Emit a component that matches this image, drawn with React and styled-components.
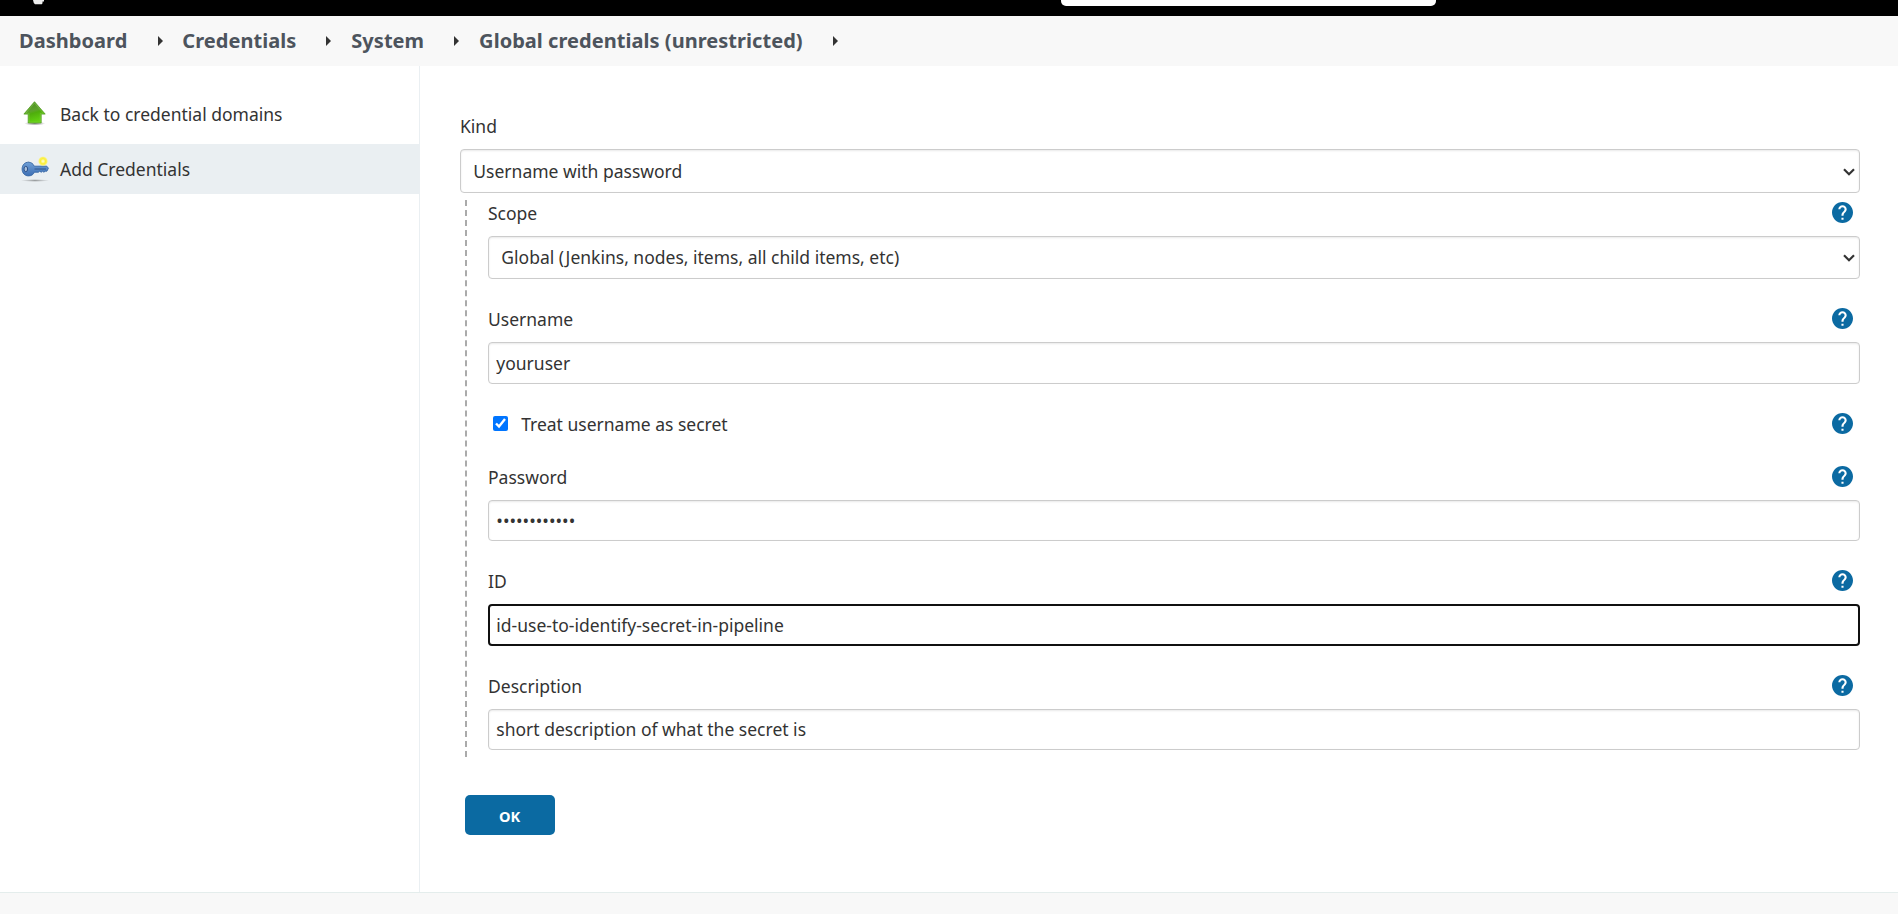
import React from "react";
import styled, { createGlobalStyle } from "styled-components";

const Global = createGlobalStyle`
  *, *::before, *::after { box-sizing: border-box; }
  body {
    margin: 0;
    background: #fff;
    color: #333;
    font-family: "Noto Sans", "Liberation Sans", sans-serif;
    font-size: 17.5px;
    line-height: 24px;
  }
`;

const Page = styled.div`
  display: flex;
  flex-direction: column;
  height: 914px;
  overflow: hidden;
`;

const TopBar = styled.header`
  display: flex;
  align-items: flex-start;
  flex: none;
  height: 16px;
  background: #000;
`;

const LogoEdge = styled.svg`
  width: 12px;
  height: 5px;
  margin-left: 33px;
`;

const SearchEdge = styled.div`
  width: 375px;
  height: 6px;
  margin-left: 1016px;
  background: #fff;
  border-radius: 0 0 5px 5px;
`;

const Breadcrumbs = styled.nav`
  display: flex;
  align-items: center;
  flex: none;
  height: 50px;
  padding-left: 19px;
  background: #f8f8f8;
`;

const Crumb = styled.a`
  color: #4d545d;
  font-size: 20px;
  font-weight: 700;
  letter-spacing: 0.04px;
  line-height: 50px;
`;

const CrumbArrow = styled.svg`
  width: 5px;
  height: 10px;
  margin: 0 19.8px 0 30.2px;
  fill: #333;
`;

const Body = styled.div`
  display: flex;
  flex: none;
  height: 826px;
`;

const Sidebar = styled.aside`
  flex: none;
  width: 420px;
  padding-top: 23px;
  border-right: 1px solid #eaeff2;
`;

const Task = styled.a`
  display: flex;
  align-items: center;
  height: 50px;
  margin-bottom: 5px;
  padding-left: 20px;
  background: ${(p) => (p.$active ? "#eaeff2" : "transparent")};

  svg {
    flex: none;
    width: 30px;
    height: 30px;
    margin-right: 10px;
  }
`;

const Main = styled.main`
  flex: 1;
  padding: 48px 38px 0 40px;
`;

const Label = styled.label`
  flex: 1;
`;

const FieldHead = styled.div`
  display: flex;
  align-items: center;
  height: 24px;
  margin-bottom: 11px;
  padding-right: 7px;
`;

const Control = styled.div`
  display: flex;
  align-items: center;
  height: ${(p) => p.$height}px;
  padding-bottom: ${(p) => p.$height % 2}px;
  border: ${(p) => (p.$focus ? "2px solid #101010" : "1px solid #ccc")};
  border-radius: 4px;
  background: #fff;
  box-shadow: ${(p) => (p.$focus ? "none" : "inset 0 1px 2px rgba(0, 0, 0, 0.09)")};
`;

const Value = styled.input`
  flex: 1;
  min-width: 0;
  padding: 0 0 0 ${(p) => (p.$focus ? 6.3 : 7.3)}px;
  border: 0;
  outline: 0;
  background: transparent;
  color: #333;
  font: inherit;
`;

const Choice = styled.select`
  flex: 1;
  appearance: none;
  padding: 0 0 0 12.3px;
  border: 0;
  outline: 0;
  background: transparent;
  color: #333;
  font: inherit;
`;

const Chevron = styled.svg`
  flex: none;
  width: 12px;
  height: 8px;
  margin: 1px 4px 0 0;
  fill: none;
  stroke: #333;
  stroke-width: 2.2;
`;

const Nested = styled.section`
  height: 557px;
  margin: 7px 0 0 5px;
  padding-left: 21px;
  border-left: 2px dashed #aaa;
`;

const Field = styled.div`
  padding-top: ${(p) => p.$top}px;
`;

const CheckRow = styled.div`
  display: flex;
  align-items: center;
  height: 24px;
  margin-top: 28px;
  padding: 0 7px 0 5px;
`;

const Checkbox = styled.input`
  width: 15px;
  height: 15px;
  margin: 0 13.2px 2px 0;
  accent-color: #0075ff;
`;

const Help = styled.svg`
  flex: none;
  width: 21px;
  height: 21px;
  margin-bottom: 2px;
  fill: #0b6aa2;
`;

const Submit = styled.button`
  display: block;
  width: 90px;
  height: 40px;
  margin: 38px 0 0 5px;
  padding: 1px 1px 0 0;
  border: 0;
  border-radius: 5px;
  background: #0b6aa2;
  color: #fff;
  font: 700 14.6px/38px "Noto Sans", sans-serif;
`;

const Footer = styled.footer`
  flex: 1;
  border-top: 1px solid #e4edec;
  background: #f8f8f8;
`;

function HelpIcon() {
  return (
    <Help viewBox="2 2 20 20" role="img" aria-label="Help">
      <path d="M12 2C6.48 2 2 6.48 2 12s4.48 10 10 10 10-4.48 10-10S17.52 2 12 2zm1 17h-2v-2h2v2zm2.07-7.75l-.9.92C13.45 12.9 13 13.5 13 15h-2v-.5c0-1.1.45-2.1 1.17-2.83l1.24-1.26c.37-.36.59-.86.59-1.41 0-1.1-.9-2-2-2s-2 .9-2 2H8c0-2.21 1.79-4 4-4s4 1.79 4 4c0 .88-.36 1.68-.93 2.25z" />
    </Help>
  );
}

function UpIcon() {
  return (
    <svg viewBox="0 0.500 30 30">
      <defs>
        <linearGradient id="up" x1="0" y1="0" x2="0.3" y2="1">
          <stop offset="0" stopColor="#468a1c" />
          <stop offset="0.5" stopColor="#5da32c" />
          <stop offset="0.62" stopColor="#4fae0c" />
          <stop offset="1" stopColor="#62d012" />
        </linearGradient>
        <radialGradient id="shade">
          <stop offset="0" stopColor="#000" stopOpacity="0.5" />
          <stop offset="1" stopColor="#000" stopOpacity="0" />
        </radialGradient>
      </defs>
      <ellipse cx="14.8" cy="25" rx="10.5" ry="2" fill="url(#shade)" />
      <path d="M14.500 3.200 25.200 15.600h-4v8.800H8.200v-8.800H3.900z" fill="url(#up)" stroke="#55a024" strokeWidth="0.8" strokeLinejoin="round" />
      <path d="M14.500 4.700 23.400 14.800H20.300v8.900H9.100v-8.900H5.800z" fill="none" stroke="#a3dc6c" strokeWidth="0.6" opacity="0.5" />
    </svg>
  );
}

function KeyIcon() {
  return (
    <svg viewBox="0 0 30 30">
      <defs>
        <linearGradient id="key" x1="0" y1="0" x2="0" y2="1">
          <stop offset="0" stopColor="#6f9fd6" />
          <stop offset="1" stopColor="#3d6fb4" />
        </linearGradient>
        <radialGradient id="glow">
          <stop offset="0" stopColor="#fffde0" />
          <stop offset="0.28" stopColor="#fdf788" />
          <stop offset="0.5" stopColor="#fbee38" />
          <stop offset="0.75" stopColor="#fcf150" stopOpacity="0.9" />
          <stop offset="1" stopColor="#fdf66c" stopOpacity="0.1" />
        </radialGradient>
        <radialGradient id="keyshade">
          <stop offset="0" stopColor="#000" stopOpacity="0.35" />
          <stop offset="1" stopColor="#000" stopOpacity="0" />
        </radialGradient>
      </defs>
      <ellipse cx="15" cy="26.500" rx="14" ry="1.400" fill="url(#keyshade)" />
      <path d="M8.200 8.200c3 0 5 1.500 6 4h12.600l1.600 2-1.500 3h-1.700l-1.300 1-1.200-1-1.500 1-1.500-1-1.300 1h-4c-1 2.300-3 3.700-6 3.700-3.700 0-6.300-3-6.300-6.900s2.600-6.800 6.300-6.800z" fill="url(#key)" stroke="#3465a4" strokeWidth="0.9" />
      <path d="M14.500 15h11.500" stroke="#31568c" strokeWidth="1" />
      <ellipse cx="5.800" cy="15" rx="1.800" ry="2.700" fill="#a9c0dc" stroke="#2d5088" strokeWidth="1" />
      <circle cx="23" cy="7.200" r="5" fill="url(#glow)" />
    </svg>
  );
}

function SelectBox({ height, value }) {
  return (
    <Control $height={height}>
      <Choice defaultValue={value}>
        <option>{value}</option>
      </Choice>
      <Chevron viewBox="0 0 12 8">
        <path d="M1 1.300 6 6.200 11 1.300" />
      </Chevron>
    </Control>
  );
}

function TextField({ label, top, height, value, type = "text", focus }) {
  return (
    <Field $top={top}>
      <FieldHead>
        <Label>{label}</Label>
        <HelpIcon />
      </FieldHead>
      <Control $height={height} $focus={focus}>
        <Value type={type} defaultValue={value} $focus={focus} spellCheck={false} />
      </Control>
    </Field>
  );
}

const crumbs = ["Dashboard", "Credentials", "System", "Global credentials (unrestricted)"];

export default function App() {
  return (
    <Page>
      <Global />
      <TopBar>
        <LogoEdge viewBox="0 0 12 5">
          <path d="M0 0h11v1.500h-1.500v1.700L8.800 4.200H2L0.800 3z" fill="#eee" />
        </LogoEdge>
        <SearchEdge />
      </TopBar>
      <Breadcrumbs>
        {crumbs.map((name) => (
          <React.Fragment key={name}>
            <Crumb>{name}</Crumb>
            <CrumbArrow viewBox="0 0 5 10">
              <path d="M0 0 5 5 0 10z" />
            </CrumbArrow>
          </React.Fragment>
        ))}
      </Breadcrumbs>
      <Body>
        <Sidebar>
          <Task>
            <UpIcon />
            Back to credential domains
          </Task>
          <Task $active>
            <KeyIcon />
            Add Credentials
          </Task>
        </Sidebar>
        <Main>
          <FieldHead>
            <Label>Kind</Label>
          </FieldHead>
          <SelectBox height={44} value="Username with password" />
          <Nested>
            <Field $top={1}>
              <FieldHead>
                <Label>Scope</Label>
                <HelpIcon />
              </FieldHead>
              <SelectBox height={43} value="Global (Jenkins, nodes, items, all child items, etc)" />
            </Field>
            <TextField label="Username" top={28} height={42} value="youruser" />
            <CheckRow>
              <Checkbox type="checkbox" defaultChecked />
              <Label>Treat username as secret</Label>
              <HelpIcon />
            </CheckRow>
            <TextField label="Password" top={29} height={41} value="yourpassword" type="password" />
            <TextField label="ID" top={28} height={42} value="id-use-to-identify-secret-in-pipeline" focus />
            <TextField label="Description" top={28} height={41} value="short description of what the secret is" />
          </Nested>
          <Submit>OK</Submit>
        </Main>
      </Body>
      <Footer />
    </Page>
  );
}
